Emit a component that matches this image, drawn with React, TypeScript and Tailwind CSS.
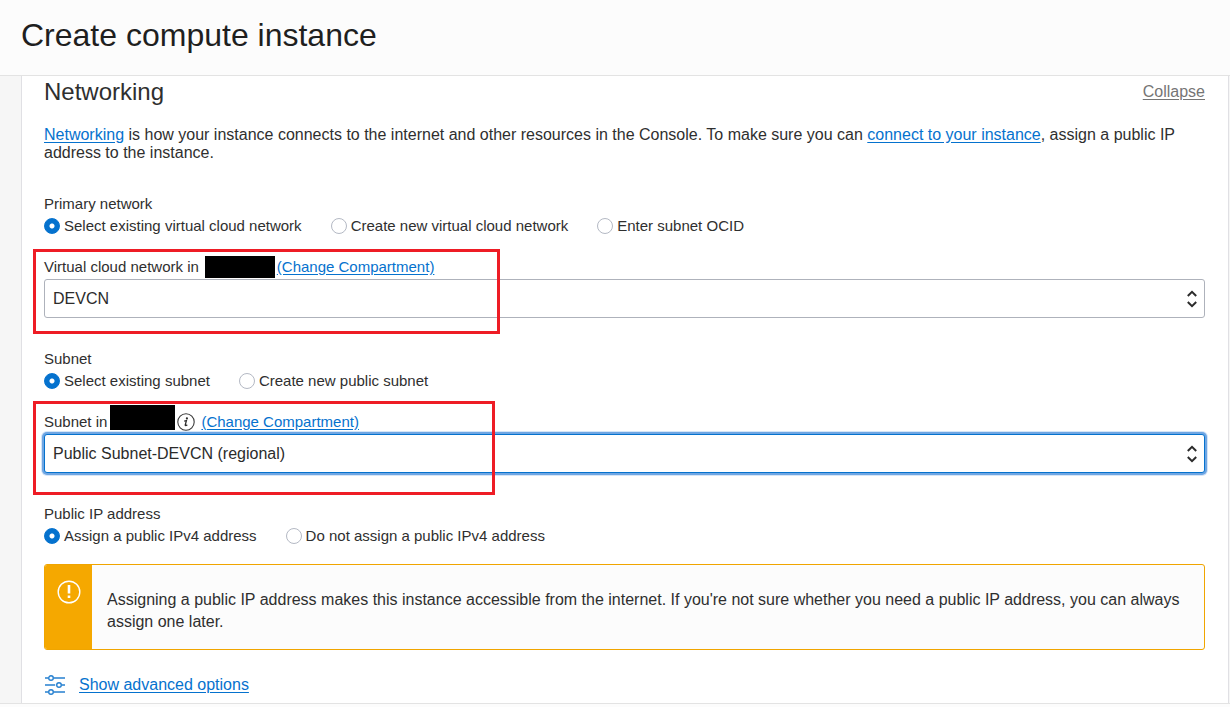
import { useState } from "react";
import type { ReactNode } from "react";

const linkClass = "text-[#0572ce] underline underline-offset-2";

function RadioGroup({
  legend,
  name,
  options,
}: {
  legend: string;
  name: string;
  options: string[];
}) {
  const [value, setValue] = useState(options[0]);
  return (
    <fieldset>
      <legend className="block leading-[22px]">{legend}</legend>
      <div className="flex flex-wrap gap-x-[29px]">
        {options.map((option) => (
          <label key={option} className="flex items-center gap-1 leading-[22px]">
            <input
              type="radio"
              name={name}
              checked={value === option}
              onChange={() => setValue(option)}
              className="size-4 shrink-0 appearance-none rounded-full border border-[#b4b9c4] bg-white checked:border-[#0572ce] checked:bg-[radial-gradient(circle,#fff_2px,#0572ce_3px)]"
            />
            {option}
          </label>
        ))}
      </div>
    </fieldset>
  );
}

function SelectBox({ id, value, focused }: { id: string; value: string; focused?: boolean }) {
  return (
    <div className="relative">
      <select
        id={id}
        defaultValue={value}
        className={
          "block h-[39px] w-full appearance-none rounded-[3px] border bg-white pl-2 pr-10 text-base text-[#2b2b2b] " +
          (focused
            ? "border-[#0572ce] shadow-[0_0_0_2px_#6fa6e3,0_0_0_3px_#d5e5f7]"
            : "border-[#aeb2bb]")
        }
      >
        <option>{value}</option>
      </select>
      <svg
        viewBox="0 0 10 18"
        className="pointer-events-none absolute right-2 top-[11px] h-[18px] w-[10px]"
        fill="none"
        stroke="#2b2b2b"
        strokeWidth="2"
        aria-hidden="true"
      >
        <path d="M0.8 6 L5 1.8 L9.2 6" />
        <path d="M0.8 12 L5 16.2 L9.2 12" />
      </svg>
    </div>
  );
}

function Callout({ className, children }: { className: string; children: ReactNode }) {
  return (
    <div className="relative mt-[18px]">
      {children}
      <div
        className={"pointer-events-none absolute -left-[11px] border-[3px] border-[#ee1c25] " + className}
      />
    </div>
  );
}

function InfoIcon() {
  return (
    <svg viewBox="0 0 18 18" className="ml-0.5 size-[18px]" fill="none" aria-hidden="true">
      <circle cx="9" cy="9" r="8.2" stroke="#3a3a3a" strokeWidth="1.1" />
      <circle cx="9.9" cy="5.4" r="1.1" fill="#2b2b2b" />
      <path
        d="M7.2 8.1 L9.4 7.7 L8.2 12 Q8.1 13.1 10.3 11.9"
        stroke="#2b2b2b"
        strokeWidth="1.3"
      />
    </svg>
  );
}

function SlidersIcon() {
  return (
    <svg
      viewBox="0 0 22 20"
      className="h-5 w-[22px]"
      fill="none"
      stroke="#2680d0"
      strokeWidth="1.4"
      aria-hidden="true"
    >
      <path d="M1 3 H4.2 M9.8 3 H21 M1 10 H11.2 M17.8 10 H21 M1 17 H4.2 M9.8 17 H21" />
      <circle cx="7" cy="3" r="2.3" />
      <circle cx="15" cy="10" r="2.3" />
      <circle cx="7" cy="17" r="2.3" />
    </svg>
  );
}

export default function App() {
  return (
    <div className="flex min-h-screen flex-col bg-[#fcfcfc] font-['Liberation_Sans',Arial,sans-serif] text-[15px] text-[#2f2f2f]">
      <header className="border-b border-[#e3e3e3] px-[21px] pb-5 pt-[15px]">
        <h1 className="text-[32px] leading-10 text-[#1f1f1f]">Create compute instance</h1>
      </header>

      <main className="border-b border-[#e3e3e3] bg-[#f6f6f6] pl-[21px] pr-px">
        <section className="border-x border-[#e0e0e4] bg-white pb-[7px] pl-[22px] pr-[23px]">
          <div className="flex items-center justify-between">
            <h2 className="text-2xl leading-8">Networking</h2>
            <button type="button" className="text-base text-[#757575] underline underline-offset-2">
              Collapse
            </button>
          </div>

          <p className="mt-[18px] text-base leading-[18px]">
            <a href="#networking" className={linkClass}>
              Networking
            </a>{" "}
            is how your instance connects to the internet and other resources in the Console. To make
            sure you can{" "}
            <a href="#connect" className={linkClass}>
              connect to your instance
            </a>
            , assign a public IP address to the instance.
          </p>

          <div className="mt-[31px] flex flex-col gap-[30px]">
            <div>
              <RadioGroup
                legend="Primary network"
                name="primary-network"
                options={[
                  "Select existing virtual cloud network",
                  "Create new virtual cloud network",
                  "Enter subnet OCID",
                ]}
              />
              <Callout className="-top-1.5 h-[85px] w-[467px]">
                <div className="flex h-6 items-center">
                  <label htmlFor="vcn" className="flex items-center">
                    Virtual cloud network in
                    <span className="ml-1.5 h-[22px] w-[70px] bg-black" />
                  </label>
                  <a href="#vcn-compartment" className={"ml-0.5 " + linkClass}>
                    (Change Compartment)
                  </a>
                </div>
                <SelectBox id="vcn" value="DEVCN" />
              </Callout>
            </div>

            <div>
              <RadioGroup
                legend="Subnet"
                name="subnet-mode"
                options={["Select existing subnet", "Create new public subnet"]}
              />
              <Callout className="-top-[9px] h-[94px] w-[462px]">
                <div className="flex h-6 items-center">
                  <label htmlFor="subnet" className="flex items-center">
                    Subnet in
                    <span className="mb-2.5 ml-[3px] h-[25px] w-[65px] bg-black" />
                  </label>
                  <InfoIcon />
                  <a href="#subnet-compartment" className={"ml-1.5 " + linkClass}>
                    (Change Compartment)
                  </a>
                </div>
                <SelectBox id="subnet" value="Public Subnet-DEVCN (regional)" focused />
              </Callout>
            </div>

            <RadioGroup
              legend="Public IP address"
              name="public-ip"
              options={["Assign a public IPv4 address", "Do not assign a public IPv4 address"]}
            />
          </div>

          <div
            role="alert"
            className="mt-[17px] flex overflow-hidden rounded-[3px] border border-[#f0a500] bg-[#fcfcfc]"
          >
            <div className="flex w-[47px] shrink-0 justify-center bg-[#f5a800] pt-[15px]">
              <svg viewBox="0 0 24 24" className="size-6" fill="none" stroke="#fff" aria-hidden="true">
                <circle cx="12" cy="12" r="10.8" strokeWidth="1.4" />
                <path d="M12 5 V13.6 M12 15.4 V18" strokeWidth="2.6" />
              </svg>
            </div>
            <p className="px-[15px] pb-4 pt-6 text-base leading-[22px]">
              Assigning a public IP address makes this instance accessible from the internet. If
              you're not sure whether you need a public IP address, you can always assign one later.
            </p>
          </div>

          <div className="mt-6 flex items-center gap-[13px] text-base leading-[22px]">
            <SlidersIcon />
            <a href="#advanced" className={linkClass}>
              Show advanced options
            </a>
          </div>
        </section>
      </main>
    </div>
  );
}
